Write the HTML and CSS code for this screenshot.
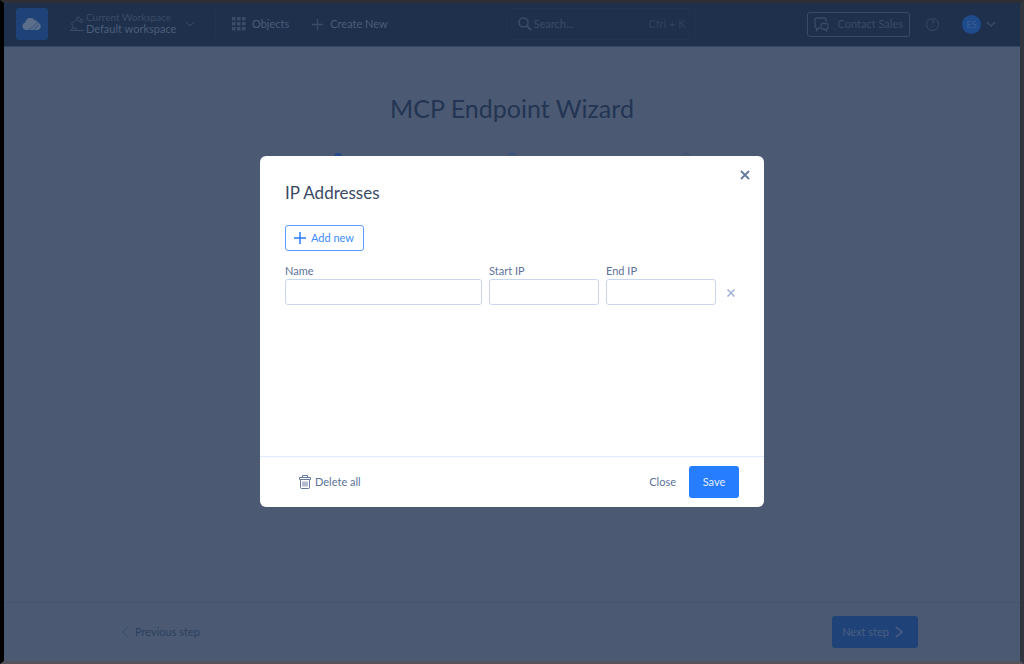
FILE: index.html
```html
<!DOCTYPE html>
<html lang="en">

<head>
	<meta charset="UTF-8">
	<meta name="viewport" content="width=device-width, initial-scale=1.0">
	<title>MCP Endpoint Wizard</title>
	<link rel="stylesheet" href="styles.css">
</head>

<body>

	<!-- Top bar -->
	<header class="topbar">
		<a class="logo" href="#" aria-label="Home">
			<svg width="20" height="14" viewBox="0 0 20 14">
				<path fill="#5b6e8c" d="M4.500 13A3.900 3.900 0 0 1 3.200 5.400 5.300 5.300 0 0 1 12.800 3.300 4 4 0 0 1 16.300 6 3.600 3.600 0 0 1 15.500 13z"/>
				<path fill="none" stroke="#1f4278" stroke-width="0.600" d="M6 13Q12 10.500 15 5.500M11.500 13Q14.500 11 16.500 7.500"/>
			</svg>
		</a>
		<button class="workspace">
			<svg width="16" height="16" viewBox="0 0 16 16" fill="none" stroke="#3a4b67">
				<path d="M1 14.500h14M3 14v-2h4v2M4.500 12 2.500 7.500 8.500 3M7.500 2l2.500 3.500 2-1.500-2.500-3.500zM10.500 5.500l2 1.500 1.500-3-2-.5"/>
			</svg>
			<span class="workspace-text">
				<span class="workspace-label">Current Workspace</span>
				<span class="workspace-name">Default workspace</span>
			</span>
			<svg width="10" height="6" viewBox="0 0 10 6" fill="none" stroke="#3a4b67"><path d="M1 1l4 4 4-4"/></svg>
		</button>
		<nav class="topnav">
			<a class="topnav-link" href="#">
				<svg width="14" height="14" viewBox="0 0 14 14" fill="#3a4b67">
					<path d="M0 0h3.500v3.500H0zM5 0h3.500v3.500H5zM10 0h3.500v3.500H10zM0 5h3.500v3.500H0zM5 5h3.500v3.500H5zM10 5h3.500v3.500H10zM0 10h3.500v3.500H0zM5 10h3.500v3.500H5zM10 10h3.500v3.500H10z"/>
				</svg>
				Objects
			</a>
			<a class="topnav-link" href="#">
				<svg width="13" height="13" viewBox="0 0 13 13" stroke="#3a4b67" stroke-width="1.300"><path d="M6.500 1v11M1 6.500h11"/></svg>
				Create New
			</a>
		</nav>
		<label class="search">
			<svg width="14" height="14" viewBox="0 0 14 14" fill="none" stroke="#3a4b67" stroke-width="1.600"><circle cx="5.500" cy="5.500" r="4.500"/><path stroke-width="2" d="M9 9l4 4"/></svg>
			<input class="search-input" type="text" placeholder="Search..." aria-label="Search">
			<span class="search-hint">Ctrl + K</span>
		</label>
		<button class="contact-btn">
			<svg width="15" height="15" viewBox="0 0 15 15" fill="none" stroke="#3a4b67" stroke-width="1.300">
				<path d="M12 5V2.500A1.500 1.500 0 0 0 10.500 1h-8A1.500 1.500 0 0 0 1 2.500v7A1.500 1.500 0 0 0 2.500 11v2.500L5 11h1M8.500 6.500h4A1.500 1.500 0 0 1 14 8v2.500a1.500 1.500 0 0 1-1.500 1.500v2L10 12H8.500A1.500 1.500 0 0 1 7 10.500V8a1.500 1.500 0 0 1 1.500-1.500z"/>
			</svg>
			Contact Sales
		</button>
		<button class="help-btn" aria-label="Help">?</button>
		<button class="user-btn">
			<span class="avatar">ES</span>
			<svg width="10" height="6" viewBox="0 0 10 6" fill="none" stroke="#3a4b67" stroke-width="1.300"><path d="M1 1l4 4 4-4"/></svg>
		</button>
	</header>

	<!-- Wizard behind the modal -->
	<main class="wizard">
		<h1 class="wizard-title">MCP Endpoint Wizard</h1>
		<div class="steps">
			<span class="step step-done"></span>
			<span class="step step-current"></span>
			<span class="step"></span>
		</div>
	</main>

	<footer class="wizard-footer">
		<button class="prev-btn">
			<svg width="8" height="12" viewBox="0 0 8 12" fill="none" stroke="#364c70"><path d="M7 1 1 6l6 5"/></svg>
			Previous step
		</button>
		<button class="next-btn">
			Next step
			<svg width="8" height="12" viewBox="0 0 8 12" fill="none" stroke="#4b5f80" stroke-width="1.500"><path d="M1 1l6 5-6 5"/></svg>
		</button>
	</footer>

	<!-- IP Addresses modal -->
	<div class="overlay">
		<form class="modal" role="dialog" aria-labelledby="modal-title">
			<button class="modal-close" type="button" aria-label="Close dialog">
				<svg width="10" height="10" viewBox="0 0 10 10" stroke="#66789e" stroke-width="1.800"><path d="M1 1l8 8M9 1 1 9"/></svg>
			</button>
			<div class="modal-body">
				<h2 class="modal-title" id="modal-title">IP Addresses</h2>
				<button class="add-btn" type="button">
					<svg width="12" height="12" viewBox="0 0 12 12" stroke="#267dff" stroke-width="1.500"><path d="M6 0v12M0 6h12"/></svg>
					Add new
				</button>
				<div class="ip-row">
					<div class="field field-name">
						<label for="ip-name">Name</label>
						<input id="ip-name" type="text">
					</div>
					<div class="field">
						<label for="ip-start">Start IP</label>
						<input id="ip-start" type="text">
					</div>
					<div class="field">
						<label for="ip-end">End IP</label>
						<input id="ip-end" type="text">
					</div>
					<button class="remove-btn" type="button" aria-label="Remove">
						<svg width="8" height="8" viewBox="0 0 8 8" stroke="#a0b0cf" stroke-width="1.500"><path d="M.5.5l7 7M7.500.5l-7 7"/></svg>
					</button>
				</div>
			</div>
			<div class="modal-footer">
				<button class="delete-btn" type="button">
					<svg width="12" height="14" viewBox="0 0 12 14" fill="none" stroke="#66789e">
						<path d="M3.500 2.500v-2h5v2M.5 2.500h11v2H.5zM1.500 4.500v8a1 1 0 0 0 1 1h7a1 1 0 0 0 1-1v-8M4 6.500v5M6 6.500v5M8 6.500v5"/>
					</svg>
					Delete all
				</button>
				<button class="close-btn" type="button">Close</button>
				<button class="save-btn" type="submit">Save</button>
			</div>
		</form>
	</div>

</body>

</html>
```
FILE: styles.css
```css
* {
	box-sizing: border-box;
}

body {
	margin: 0;
	min-height: 100vh;
	display: flex;
	flex-direction: column;
	border: solid;
	border-width: 3px 4px 3px 4px;
	border-color: #2e2f36 #33353e #55535c #000;
	background-color: #4b5a72;
	font-family: Lato, sans-serif;
	font-size: 11px;
	line-height: 16px;
}

button {
	display: flex;
	align-items: center;
	padding: 0;
	border: none;
	background: none;
	font: inherit;
	cursor: pointer;
}

svg {
	flex: none;
}

/* Top bar */
.topbar {
	display: flex;
	align-items: center;
	height: 44px;
	padding: 0 24px 1px 12px;
	border-bottom: 1px solid #30465f;
	background-color: #1f304d;
	color: #4b5d79;
}

.logo {
	display: flex;
	align-items: center;
	justify-content: center;
	width: 32px;
	height: 32px;
	border-radius: 3px;
	background-color: #1f4278;
}

.workspace {
	gap: 1px;
	margin-left: 21px;
	color: #4b5d79;
	text-align: left;
}

.workspace-text {
	display: flex;
	flex-direction: column;
	width: 98px;
	padding-bottom: 3px;
	line-height: 11px;
}

.workspace-label {
	font-size: 10px;
	color: #3a4b67;
}

.topnav {
	display: flex;
	align-items: center;
	gap: 22px;
	height: 24px;
	margin-left: 20px;
	padding-left: 16px;
	border-left: 1px solid #23344f;
}

.topnav-link {
	display: flex;
	align-items: center;
	gap: 6px;
	color: #4b5d79;
	text-decoration: none;
}

.search {
	display: flex;
	align-items: center;
	width: 190px;
	height: 32px;
	margin-left: auto;
	margin-right: 111px;
	padding: 0 9px 0 11px;
	border: 1px solid #213350;
	border-radius: 3px;
	color: #30415e;
}

.search-input {
	flex: 1;
	min-width: 0;
	padding: 0 2px;
	border: none;
	background: none;
	font: inherit;
}

.search-input::placeholder {
	color: #3a4b67;
}

.contact-btn {
	gap: 9px;
	height: 25px;
	padding: 0 6px;
	border: 1px solid #3a4b67;
	border-radius: 3px;
	color: #3a4b67;
}

.help-btn {
	justify-content: center;
	width: 13px;
	height: 13px;
	margin-left: 16px;
	border: 1px solid #3a4b67;
	border-radius: 50%;
	color: #3a4b67;
	font-size: 9px;
}

.user-btn {
	gap: 5px;
	margin-left: 23px;
}

.avatar {
	width: 19px;
	height: 19px;
	border-radius: 50%;
	background-color: #1f4a8c;
	color: #3a5f96;
	font-size: 9px;
	line-height: 19px;
	text-align: center;
}

/* Wizard */
.wizard {
	flex: 1;
}

.wizard-title {
	margin: 43px 0 0;
	color: #233552;
	font-size: 25px;
	font-weight: 400;
	line-height: 36px;
	text-align: center;
}

.steps {
	display: flex;
	justify-content: space-between;
	width: 358px;
	margin: 27px auto 0;
}

.step {
	width: 10px;
	height: 10px;
	border: 1px solid #3b4f7a;
	border-radius: 50%;
}

.step-current {
	border-color: #264a8a;
}

.step-done {
	border-color: #264a8a;
	background-color: #264a8a;
}

.wizard-footer {
	display: flex;
	align-items: center;
	justify-content: space-between;
	height: 59px;
	padding: 0 102px 0 117px;
	border-top: 1px solid #445571;
}

.prev-btn {
	gap: 6px;
	color: #2b4060;
}

.next-btn {
	gap: 6px;
	height: 32px;
	padding: 0 15px 0 10px;
	border-radius: 3px;
	background-color: #1f4278;
	color: #4b5f80;
}

/* Modal */
.overlay {
	position: fixed;
	inset: 0;
	display: flex;
	align-items: center;
	justify-content: center;
	padding-bottom: 1px;
}

.modal {
	position: relative;
	display: flex;
	flex-direction: column;
	width: 504px;
	max-width: 100%;
	min-height: 351px;
	border-radius: 6px;
	background-color: #fff;
	color: #5c7299;
}

.modal-close {
	position: absolute;
	top: 14px;
	right: 14px;
}

.modal-body {
	flex: 1;
	padding: 25px 25px 0;
}

.modal-title {
	margin: 0 0 20px;
	color: #3b4a63;
	font-size: 17px;
	font-weight: 400;
	line-height: 24px;
}

.add-btn {
	gap: 5px;
	height: 26px;
	padding: 0 9px 0 8px;
	border: 1px solid #5c9dff;
	border-radius: 3px;
	color: #3d8bff;
}

.ip-row {
	display: flex;
	align-items: flex-end;
	gap: 7px;
	margin-top: 12px;
}

.field {
	display: flex;
	flex: 0 1 110px;
	flex-direction: column;
	min-width: 0;
}

.field-name {
	flex: 1;
}

.field input {
	height: 26px;
	padding: 0 8px;
	border: 1px solid #c9d6f0;
	border-radius: 3px;
	font: inherit;
}

.remove-btn {
	justify-content: center;
	width: 16px;
	height: 24px;
}

.modal-footer {
	display: flex;
	align-items: center;
	height: 51px;
	padding: 0 25px 1px 39px;
	border-top: 1px solid #dfe9ff;
}

.modal-footer button {
	color: #5c7299;
}

.delete-btn {
	gap: 4px;
	margin-right: auto;
}

.modal-footer .save-btn {
	justify-content: center;
	width: 50px;
	height: 32px;
	margin-left: 13px;
	border-radius: 3px;
	background-color: #267dff;
	color: #e4eeff;
}
```
